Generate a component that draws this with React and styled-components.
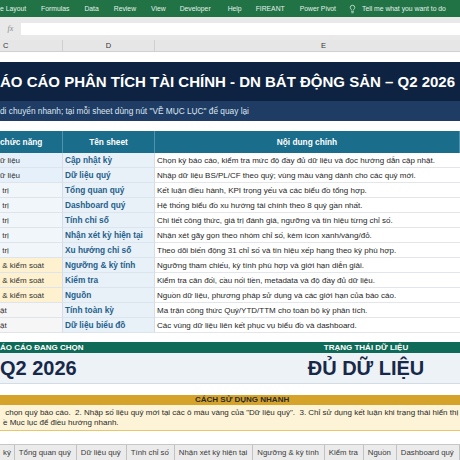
import React from "react";
import styled, { createGlobalStyle } from "styled-components";

const GlobalStyle = createGlobalStyle`
  html, body {
    margin: 0;
    padding: 0;
    background: #ffffff;
  }
  body {
    font-family: "Liberation Sans", Arial, sans-serif;
    width: 460px;
    height: 460px;
    overflow: hidden;
  }
  * { box-sizing: border-box; }
`;

const Page = styled.div`
  width: 460px;
  height: 460px;
  overflow: hidden;
  display: flex;
  flex-direction: column;
  background: #ffffff;
`;

// Excel chrome
const Ribbon = styled.div`
  height: 17px;
  background: #217346;
  display: flex;
  align-items: center;
  white-space: nowrap;
  overflow: hidden;
`;

const RibbonTab = styled.span`
  font-size: 6.8px;
  color: #e4f0e8;
  margin-left: ${(p) => p.$gap}px;
  flex-shrink: 0;
`;

const TellMe = styled.span`
  display: flex;
  align-items: center;
  gap: 5px;
  margin-left: 12px;
  font-size: 6.8px;
  color: #e4f0e8;
  flex-shrink: 0;
`;

const FormulaBar = styled.div`
  height: 23px;
  background: #e9e9e9;
  display: flex;
  align-items: flex-start;
  padding-top: 6px;
`;

const Fx = styled.span`
  width: 21px;
  text-align: center;
  font-family: "Liberation Serif", serif;
  font-style: italic;
  font-size: 8px;
  color: #8a8a8a;
  line-height: 12px;
`;

const FormulaInput = styled.div`
  flex: 1;
  height: 12px;
  background: #ffffff;
`;

const ColHeaders = styled.div`
  height: 12px;
  display: grid;
  grid-template-columns: 63px 92px 338px;
  background: #e6e6e6;
  border-bottom: 1px solid #d0d0d0;
`;

const ColHead = styled.div`
  font-size: 7.5px;
  color: #333;
  line-height: 11px;
  text-align: ${(p) => (p.$left ? "left" : "center")};
  padding-left: ${(p) => (p.$left ? "3px" : "0")};
  border-right: 1px solid #cfcfcf;
`;

const Spacer = styled.div`
  height: ${(p) => p.$h}px;
  flex-shrink: 0;
`;

// Report content
const TitleBand = styled.div`
  height: 39px;
  background: #0e2342;
  display: flex;
  align-items: center;
  white-space: nowrap;
  overflow: hidden;
`;

const Title = styled.h1`
  margin: 0;
  font-size: 15px;
  font-weight: 700;
  color: #ffffff;
`;

const SubBand = styled.div`
  height: 20px;
  background: #1e3c64;
  display: flex;
  align-items: center;
  white-space: nowrap;
  overflow: hidden;
  font-size: 8.3px;
  color: #dde5ef;
`;

const Table = styled.div`
  display: flex;
  flex-direction: column;
`;

const Row = styled.div`
  display: grid;
  grid-template-columns: 63px 92px 1fr;
  height: ${(p) => (p.$head ? 22 : 15)}px;
`;

const HeadCell = styled.div`
  background: #1b6d8c;
  color: #ffffff;
  font-weight: 700;
  font-size: 8.3px;
  display: flex;
  align-items: center;
  justify-content: ${(p) => (p.$left ? "flex-start" : "center")};
  border-right: 1px solid #4f93ad;
  white-space: nowrap;
  overflow: hidden;
`;

const groupColors = {
  data: "#e6f0fa",
  manage: "#f1f6fb",
  control: "#fdf1cf",
  tech: "#f6f6f6",
};

const GroupCell = styled.div`
  background: ${(p) => groupColors[p.$group]};
  font-size: 8px;
  color: #333;
  display: flex;
  align-items: center;
  white-space: pre;
  overflow: hidden;
  border-bottom: 1px solid #dfe4ea;
  border-right: 1px solid #d6dde6;
`;

const SheetCell = styled.div`
  background: #e8f0f8;
  color: #1f5f8b;
  font-weight: 700;
  font-size: 8.3px;
  display: flex;
  align-items: center;
  padding-left: 2px;
  white-space: nowrap;
  overflow: hidden;
  border-bottom: 1px solid #dce4ee;
  border-right: 1px solid #d6dde6;
`;

const DescCell = styled.div`
  background: #ffffff;
  color: #262626;
  font-size: 8px;
  display: flex;
  align-items: center;
  padding-left: 2px;
  white-space: nowrap;
  overflow: hidden;
  border-bottom: 1px solid #e2e6eb;
`;

const StatusBand = styled.div`
  height: 11px;
  background: #0f6a57;
  display: grid;
  grid-template-columns: 272px 1fr;
`;

const StatusLabel = styled.div`
  font-size: 8px;
  font-weight: 700;
  color: #ffffff;
  line-height: 11px;
  text-align: ${(p) => (p.$center ? "center" : "left")};
  white-space: nowrap;
  overflow: hidden;
`;

const StatusValues = styled.div`
  height: 31px;
  background: #edf2f7;
  border-bottom: 1px solid #d3dbe4;
  display: grid;
  grid-template-columns: 272px 1fr;
  align-items: center;
`;

const BigValue = styled.div`
  font-size: 20px;
  font-weight: 700;
  color: #172848;
  text-align: ${(p) => (p.$center ? "center" : "left")};
  white-space: nowrap;
`;

const GuideHead = styled.div`
  height: 10px;
  background: #d5a32a;
  font-size: 8px;
  font-weight: 700;
  color: #2a2a2a;
  line-height: 10px;
  padding-left: 195px;
  white-space: nowrap;
`;

const GuideBody = styled.div`
  height: 26px;
  background: #fdf3d6;
  border-bottom: 1px solid #e6c76c;
  padding: 3px 0 0 3px;
  font-size: 8px;
  color: #2a2a2a;
  line-height: 10px;
  white-space: pre;
  overflow: hidden;
`;

const TabBar = styled.div`
  height: 16px;
  background: #ebebeb;
  border-top: 1px solid #c6c6c6;
  display: flex;
  align-items: center;
  white-space: nowrap;
  overflow: hidden;
`;

const SheetTab = styled.div`
  font-size: 7.8px;
  color: #3a3a3a;
  padding: 0 ${(p) => p.$pr ?? 5}px 0 ${(p) => p.$pl ?? 4}px;
  height: 100%;
  display: flex;
  align-items: center;
  border-right: 1px solid #c2c2c2;
  flex-shrink: 0;
`;

const ribbonTabs = [
  ["e Layout", 0],
  ["Formulas", 15],
  ["Data", 15],
  ["Review", 15],
  ["View", 15],
  ["Developer", 14],
  ["Help", 17],
  ["FIREANT", 14],
  ["Power Pivot", 15],
];

const rows = [
  ["data", "ữ liệu", "Cập nhật kỳ", "Chọn kỳ báo cáo, kiểm tra mức độ đầy đủ dữ liệu và đọc hướng dẫn cập nhật."],
  ["data", "ữ liệu", "Dữ liệu quý", "Nhập dữ liệu BS/PL/CF theo quý; vùng màu vàng dành cho các quý mới."],
  ["manage", " trị", "Tổng quan quý", "Kết luận điều hành, KPI trọng yếu và các biểu đồ tổng hợp."],
  ["manage", " trị", "Dashboard quý", "Hệ thống biểu đồ xu hướng tài chính theo 8 quý gần nhất."],
  ["manage", " trị", "Tính chỉ số", "Chi tiết công thức, giá trị đánh giá, ngưỡng và tín hiệu từng chỉ số."],
  ["manage", " trị", "Nhận xét kỳ hiện tại", "Nhận xét gãy gọn theo nhóm chỉ số, kèm icon xanh/vàng/đỏ."],
  ["manage", " trị", "Xu hướng chỉ số", "Theo dõi biến động 31 chỉ số và tín hiệu xếp hạng theo kỳ phù hợp."],
  ["control", " & kiểm soát", "Ngưỡng & kỳ tính", "Ngưỡng tham chiếu, kỳ tính phù hợp và giới hạn diễn giải."],
  ["control", " & kiểm soát", "Kiểm tra", "Kiểm tra cân đối, cầu nối tiền, metadata và độ đầy đủ dữ liệu."],
  ["control", " & kiểm soát", "Nguồn", "Nguồn dữ liệu, phương pháp sử dụng và các giới hạn của báo cáo."],
  ["tech", "ật", "Tính toàn kỳ", "Ma trận công thức Quý/YTD/TTM cho toàn bộ kỳ phân tích."],
  ["tech", "ật", "Dữ liệu biểu đồ", "Các vùng dữ liệu liên kết phục vụ biểu đồ và dashboard."],
];

const sheetTabs = [
  "Tổng quan quý",
  "Dữ liệu quý",
  "Tính chỉ số",
  "Nhận xét kỳ hiện tại",
  "Ngưỡng & kỳ tính",
  "Kiểm tra",
  "Nguồn",
  "Dashboard quý",
];

const Bulb = () => (
  <svg width="9" height="10" viewBox="0 0 24 24" fill="none" stroke="#e4f0e8" strokeWidth="2" strokeLinecap="round" strokeLinejoin="round">
    <path d="M15 14c.2-1 .7-1.7 1.5-2.5 1-.9 1.5-2.2 1.5-3.5A6 6 0 0 0 6 8c0 1 .2 2.2 1.5 3.5.7.7 1.3 1.5 1.5 2.5" />
    <path d="M9 18h6" />
    <path d="M10 22h4" />
  </svg>
);

export default function App() {
  return (
    <Page>
      <GlobalStyle />
      <Ribbon>
        {ribbonTabs.map(([label, gap]) => (
          <RibbonTab key={label} $gap={gap}>{label}</RibbonTab>
        ))}
        <TellMe>
          <Bulb />
          Tell me what you want to do
        </TellMe>
      </Ribbon>
      <FormulaBar>
        <Fx>fx</Fx>
        <FormulaInput />
      </FormulaBar>
      <ColHeaders>
        <ColHead $left>C</ColHead>
        <ColHead>D</ColHead>
        <ColHead>E</ColHead>
      </ColHeaders>
      <Spacer $h={10} />
      <TitleBand>
        <Title>ÁO CÁO PHÂN TÍCH TÀI CHÍNH - DN BÁT ĐỘNG SẢN – Q2 2026</Title>
      </TitleBand>
      <SubBand>di chuyển nhanh; tại mỗi sheet dùng nút "VỀ MỤC LỤC" để quay lại</SubBand>
      <Spacer $h={10} />
      <Table>
        <Row $head>
          <HeadCell $left>chức năng</HeadCell>
          <HeadCell>Tên sheet</HeadCell>
          <HeadCell>Nội dung chính</HeadCell>
        </Row>
        {rows.map(([group, groupLabel, sheet, desc]) => (
          <Row key={sheet}>
            <GroupCell $group={group}>{groupLabel}</GroupCell>
            <SheetCell>{sheet}</SheetCell>
            <DescCell>{desc}</DescCell>
          </Row>
        ))}
      </Table>
      <Spacer $h={9} />
      <StatusBand>
        <StatusLabel>ÁO CÁO ĐANG CHỌN</StatusLabel>
        <StatusLabel $center>TRẠNG THÁI DỮ LIỆU</StatusLabel>
      </StatusBand>
      <StatusValues>
        <BigValue>Q2 2026</BigValue>
        <BigValue $center>ĐỦ DỮ LIỆU</BigValue>
      </StatusValues>
      <Spacer $h={11} />
      <GuideHead>CÁCH SỬ DỤNG NHANH</GuideHead>
      <GuideBody>
        {" chọn quý báo cáo.  2. Nhập số liệu quý mới tại các ô màu vàng của \"Dữ liệu quý\".  3. Chỉ sử dụng kết luận khi trạng thái hiển thị\nề Mục lục để điều hướng nhanh."}
      </GuideBody>
      <Spacer $h={13} />
      <TabBar>
        <SheetTab $pl={3} $pr={3}>ký</SheetTab>
        {sheetTabs.map((t) => (
          <SheetTab key={t}>{t}</SheetTab>
        ))}
      </TabBar>
    </Page>
  );
}
